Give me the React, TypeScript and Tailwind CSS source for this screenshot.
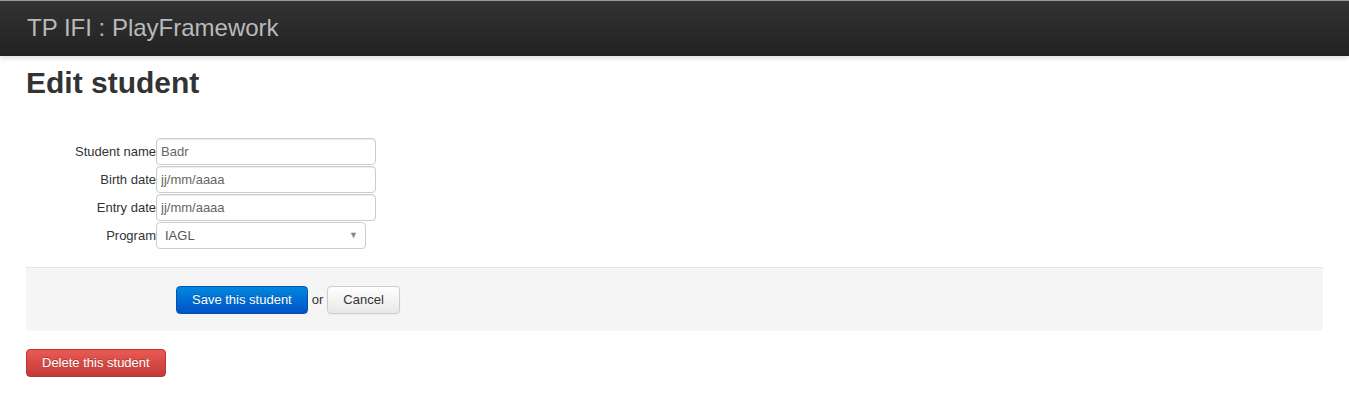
import type { ReactNode } from 'react';

const FONT = { fontFamily: '"Liberation Sans", Arial, Helvetica, sans-serif' };

function Row({ label, children }: { label: string; children: ReactNode }) {
  return (
    <div className="flex items-center">
      <label className="w-[130px] text-right text-[13px] leading-[18px] text-[#333]">{label}</label>
      {children}
    </div>
  );
}

function TextInput({ value }: { value: string }) {
  return (
    <input
      type="text"
      readOnly
      value={value}
      className="h-[27px] w-[220px] rounded-[4px] border border-[#ccc] bg-white px-[4px] text-[13px] text-[#666] shadow-[inset_0_1px_1px_rgba(0,0,0,0.075)] outline-none"
    />
  );
}

export default function App() {
  return (
    <div className="min-h-[402px] bg-white" style={FONT}>
      <header className="flex h-[56px] items-center border-t border-[#9a9a9a] bg-gradient-to-b from-[#333] to-[#222] px-[27px] shadow-[0_2px_5px_rgba(0,0,0,0.15)]">
        <span className="pb-px text-[24px] leading-[28px] text-[#bababa]">TP IFI : PlayFramework</span>
      </header>

      <main className="px-[26px]">
        <h1 className="mt-[9px] text-[30px] font-bold leading-[36px] text-[#333]">Edit student</h1>

        <form className="mt-[37px]" onSubmit={(e) => e.preventDefault()}>
          <div className="flex flex-col gap-px">
            <Row label="Student name">
              <TextInput value="Badr" />
            </Row>
            <Row label="Birth date">
              <TextInput value="jj/mm/aaaa" />
            </Row>
            <Row label="Entry date">
              <TextInput value="jj/mm/aaaa" />
            </Row>
            <Row label="Program">
              <div className="flex h-[27px] w-[210px] items-center justify-between rounded-[4px] border border-[#ccc] bg-white pl-[8px] pr-[7px] text-[13px] text-[#555]">
                <span>IAGL</span>
                <span className="text-[9px] text-[#888]">▼</span>
              </div>
            </Row>
          </div>

          <div className="mt-[18px] flex h-[64px] items-center gap-[4px] rounded-b-[4px] border-t border-[#e5e5e5] bg-[#f5f5f5] pl-[150px] pt-[1px]">
            <button
              type="submit"
              className="h-[28px] rounded-[4px] border border-[#0055b0] bg-gradient-to-b from-[#0088dd] to-[#0050c8] px-[15px] text-[13px] text-white [text-shadow:0_-1px_0_rgba(0,0,0,0.25)]"
            >
              Save this student
            </button>
            <span className="text-[13px] text-[#333]">or</span>
            <button
              type="button"
              className="h-[28px] rounded-[4px] border border-[#ccc] bg-gradient-to-b from-white to-[#e8e8e8] px-[15px] text-[13px] text-[#333] shadow-[0_1px_2px_rgba(0,0,0,0.05)]"
            >
              Cancel
            </button>
          </div>
        </form>

        <button
          type="button"
          className="mt-[18px] h-[28px] rounded-[4px] border border-[#b8342f] bg-gradient-to-b from-[#ea5a55] to-[#c23a34] px-[15px] text-[13px] text-white [text-shadow:0_-1px_0_rgba(0,0,0,0.25)]"
        >
          Delete this student
        </button>
      </main>
    </div>
  );
}
